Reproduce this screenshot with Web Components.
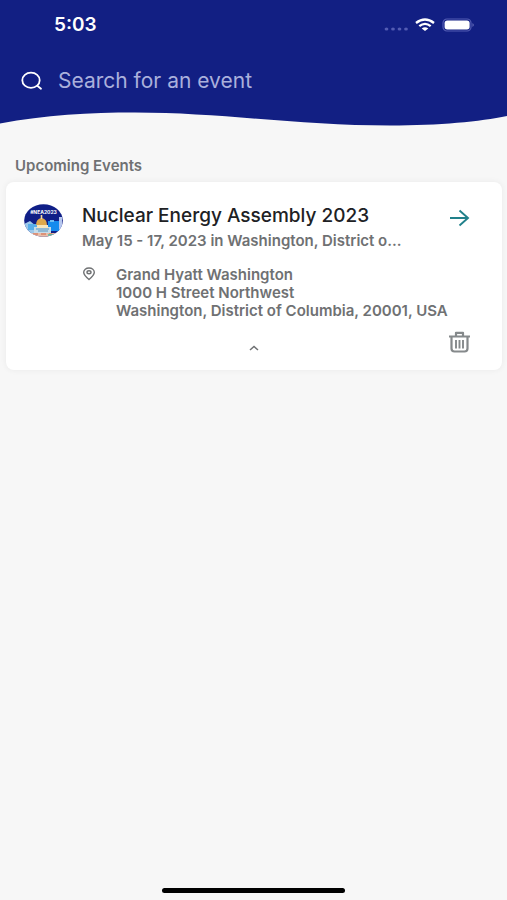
<!DOCTYPE html>
<html lang="en">
<head>
<meta charset="utf-8">
<meta name="viewport" content="width=device-width, initial-scale=1">
<title>Events</title>
<style>
html, body { margin: 0; }
body { min-height: 100vh; background: #f7f7f7; font-family: Inter, "Liberation Sans", sans-serif; }
</style>
</head>
<body>
<events-app></events-app>
<script>
function define(name, markup) {
  const template = document.createElement('template');
  template.innerHTML = markup;
  customElements.define(name, class extends HTMLElement {
    constructor() {
      super();
      this.attachShadow({ mode: 'open' }).append(template.content.cloneNode(true));
    }
  });
}

define('status-bar', `
<style>
:host { display: flex; justify-content: space-between; align-items: center; height: 49px; padding: 0 32px 0 54px; color: #fff; }
time { font-size: 19px; line-height: 24px; font-weight: 600; }
.icons { display: flex; align-items: center; gap: 7px; }
svg { display: block; }
</style>
<time>5:03</time>
<div class="icons">
  <svg width="24" height="16" viewBox="0 0 24 16" fill="#535cb3"><ellipse cx="2.5" cy="12" rx="1.9" ry="1.5"/><ellipse cx="9" cy="12" rx="1.9" ry="1.5"/><ellipse cx="15.5" cy="12" rx="1.9" ry="1.5"/><ellipse cx="22" cy="12" rx="1.9" ry="1.5"/></svg>
  <svg width="20" height="14" viewBox="0 0 20 14" fill="none" stroke="#fff" stroke-width="2.3"><path d="M1 5Q10-2 19 5M4.3 8.2Q10 3.6 15.7 8.2"/><path d="M10 13L6.7 10.4Q10 8 13.3 10.4Z" fill="#fff" stroke="none"/></svg>
  <svg width="33" height="14" viewBox="0 0 33 14"><rect x="1" y="1" width="28" height="12" rx="4" fill="none" stroke="#535cb3" stroke-width="1.2"/><rect x="2.6" y="2.5" width="25" height="9" rx="2.7" fill="#fff"/><path d="M30.5 5Q33 7 30.5 9Z" fill="#6971bd"/></svg>
</div>`);

define('search-field', `
<style>
:host { display: block; padding: 0 21px; }
label { display: flex; align-items: center; gap: 15px; height: 63px; }
svg { flex: none; display: block; }
input { flex: 1; min-width: 0; padding: 0; border: 0; outline: 0; background: none; color: #fff; font: 400 21px/28px Inter, "Liberation Sans", sans-serif; }
input::placeholder { color: #aab0dc; opacity: 1; }
</style>
<label>
  <svg width="22" height="20" viewBox="0 0 22 20" fill="none" stroke="#fff" stroke-width="1.8" stroke-linecap="round"><ellipse cx="10" cy="9.3" rx="8.7" ry="7.6"/><path d="M16.3 14.8L20 17.8"/></svg>
  <input type="search" placeholder="Search for an event" aria-label="Search for an event">
</label>`);

define('wave-header', `
<style>
:host { display: block; background: #121f83; }
svg { display: block; width: 100%; height: 16px; }
</style>
<slot></slot>
<svg viewBox="0 0 507 16" preserveAspectRatio="none"><path d="M0 11.5C45 3 90 .5 135 .5C220 .5 300 13.5 390 13.5C440 13.5 480 9.5 507 4V16H0Z" fill="#f7f7f7"/></svg>`);

define('event-avatar', `
<style>:host, svg { display: block; }</style>
<svg width="39" height="33" viewBox="0 0 39 33" role="img" aria-label="Event logo">
  <defs><clipPath id="c"><ellipse cx="19.5" cy="16.5" rx="19.3" ry="16.3"/></clipPath></defs>
  <g clip-path="url(#c)">
    <path d="M0 0H39V33H0Z" fill="#101f87"/>
    <path d="M0 20L6 17L12 22V33H0Z" fill="#9ec9ea"/>
    <path d="M4 20H13V26H4Z" fill="#58aee9"/>
    <path d="M24 17H36V27H24Z" fill="#168bed"/>
    <path d="M26 16H30V18H26Z" fill="#72bdf2"/>
    <path d="M35 13H38V28H35Z" fill="#b6c7ef"/>
    <path d="M10 23H27V29H10Z" fill="#c5dcea"/>
    <path d="M13 21H24V24H13Z" fill="#f7e6bd"/>
    <path d="M12 21Q12 15 17.5 14Q23 15 23 21Z" fill="#dda84c"/>
    <path d="M16.7 11H18.3V15H16.7Z" fill="#f8db9b"/>
    <path d="M12 25H25M14 27H24" stroke="#5a95bd" stroke-width="1"/>
    <path d="M2 29H37V33H2Z" fill="#e9bda8"/>
    <path d="M9 30H14M17 30H22M25 30H28" stroke="#d98468" stroke-width="1.5"/>
    <path d="M24 31H34" stroke="#4ebaa4" stroke-width="1.5"/>
    <text x="19.5" y="9.5" text-anchor="middle" fill="#fff" font-family="Inter, sans-serif" font-size="5" font-weight="700">#NEA2023</text>
  </g>
</svg>`);

define('event-card', `
<style>
:host { display: block; background: #fff; border-radius: 8px; box-shadow: 0 0 6px rgba(0,0,0,.06); color: #6f7173; }
article { padding: 22px 32px 17px 18px; }
.top { display: grid; grid-template-columns: 39px minmax(0, 1fr) auto; column-gap: 19px; }
.title { display: block; color: #202124; font-size: 19px; line-height: 24px; font-weight: 500; }
.date { display: block; overflow: hidden; white-space: nowrap; text-overflow: ellipsis; font-size: 15px; line-height: 18px; font-weight: 600; margin-top: 4px; }
.place { display: grid; grid-template-columns: 14px minmax(0, 1fr); column-gap: 20px; margin: 16px 0 0 58px; }
.place svg { margin-top: 1px; }
address { font-style: normal; font-size: 15px; line-height: 18px; font-weight: 600; white-space: nowrap; }
.actions { display: grid; grid-template-columns: 1fr auto 1fr; align-items: center; margin: 11px -14px 0 0; }
button { display: block; padding: 0; border: 0; background: none; color: inherit; }
.toggle { grid-column: 2; margin-top: 12px; }
.trash { justify-self: end; margin-right: 14px; color: #85898b; }
svg { display: block; fill: none; stroke: currentColor; }
a { display: block; color: #21818b; margin-top: 5px; height: 20px; }
</style>
<article>
  <div class="top">
    <event-avatar></event-avatar>
    <div>
      <slot name="title" class="title"></slot>
      <slot name="date" class="date"></slot>
    </div>
    <a href="#" aria-label="Open event"><svg width="21" height="18" viewBox="0 0 21 18" stroke-width="1.9"><path d="M1 9H19M10.5 1.5L19 9L10.5 16.5"/></svg></a>
  </div>
  <div class="place">
    <svg width="14" height="14" viewBox="0 0 14 14" stroke-width="1.4"><path d="M7 12.5C4 10 1.7 7.7 1.7 5.3C1.7 2.7 4 1 7 1S12.3 2.7 12.3 5.3C12.3 7.7 10 10 7 12.5Z"/><ellipse cx="7" cy="5.3" rx="2" ry="1.5"/></svg>
    <address><slot name="address"></slot></address>
  </div>
  <div class="actions">
    <button class="toggle" aria-label="Collapse details"><svg width="10" height="6" viewBox="0 0 10 6" stroke-width="1.5"><path d="M1 5L5 1.5L9 5"/></svg></button>
    <button class="trash" aria-label="Delete event"><svg width="21" height="22" viewBox="0 0 21 22" stroke-width="2.2" stroke-linejoin="round"><path d="M0 5.5H21M7 5V1.8H14V5M2.5 5.5V17.5Q2.5 20.5 5.5 20.5H15.5Q18.5 20.5 18.5 17.5V5.5"/><path stroke-width="1.9" d="M7 9V17.5M10.5 9V17.5M14 9V17.5"/></svg></button>
  </div>
</article>`);

define('home-indicator', `
<style>
:host { display: flex; justify-content: center; padding: 8px 0 7px; }
div { width: 36%; height: 5px; border-radius: 3px; background: #000; }
</style>
<div></div>`);

define('events-app', `
<style>
:host { display: flex; flex-direction: column; min-height: 100vh; }
main { flex: 1; padding: 29px 5px 0 6px; }
h1 { margin: 0 0 7px 9px; color: #6f7173; font-size: 15px; line-height: 18px; font-weight: 600; }
</style>
<wave-header><status-bar></status-bar><search-field></search-field></wave-header>
<main>
  <h1>Upcoming Events</h1>
  <event-card>
    <span slot="title">Nuclear Energy Assembly 2023</span>
    <span slot="date">May 15 - 17, 2023 in Washington, District o...</span>
    <span slot="address">Grand Hyatt Washington<br>1000 H Street Northwest<br>Washington, District of Columbia, 20001, USA</span>
  </event-card>
</main>
<home-indicator></home-indicator>`);
</script>
</body>
</html>
